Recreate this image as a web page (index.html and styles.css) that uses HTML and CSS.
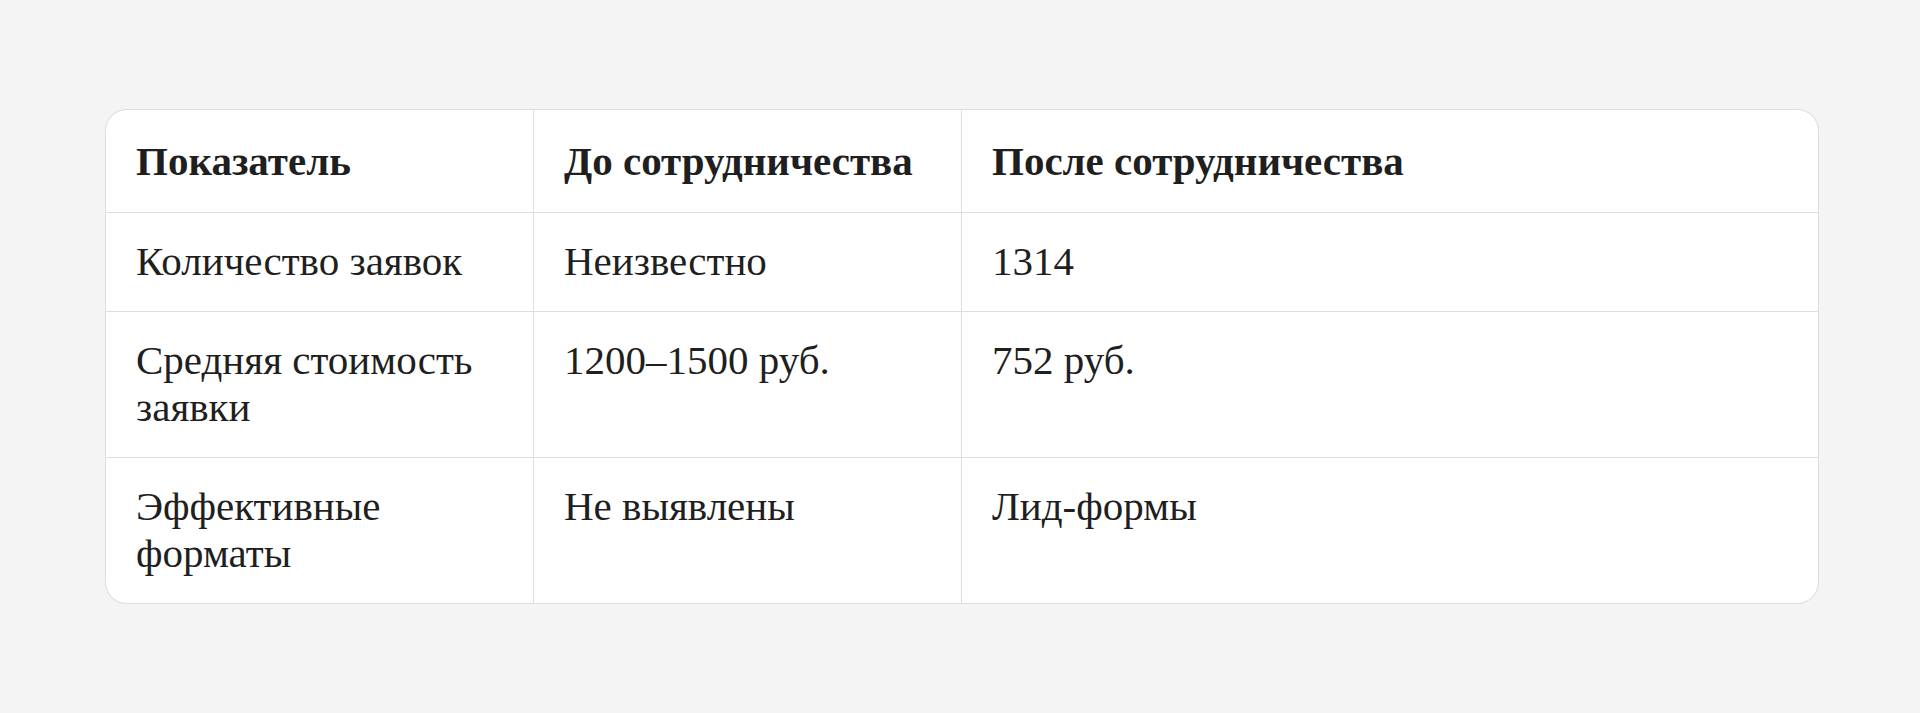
FILE: index.html
```html
<!DOCTYPE html>
<html lang="ru">
<head>
<meta charset="utf-8">
<title>Таблица</title>
<link rel="stylesheet" href="styles.css">
</head>
<body>
<main class="page">
  <div class="card">
    <table class="data">
      <colgroup>
        <col class="c1">
        <col class="c2">
        <col class="c3">
      </colgroup>
      <thead>
        <tr>
          <th>Показатель</th>
          <th>До сотрудничества</th>
          <th>После сотрудничества</th>
        </tr>
      </thead>
      <tbody>
        <tr>
          <td>Количество заявок</td>
          <td>Неизвестно</td>
          <td>1314</td>
        </tr>
        <tr>
          <td>Средняя стоимость заявки</td>
          <td>1200–1500 руб.</td>
          <td>752 руб.</td>
        </tr>
        <tr>
          <td>Эффективные форматы</td>
          <td>Не выявлены</td>
          <td>Лид-формы</td>
        </tr>
      </tbody>
    </table>
  </div>
</main>
</body>
</html>
```
FILE: styles.css
```css
html, body {
  margin: 0;
  padding: 0;
  background: #f4f4f4;
}
.page {
  padding: 109px 101px 0 105px;
}
.card {
  background: #ffffff;
  border: 1px solid #dedede;
  border-radius: 22px;
  overflow: hidden;
  box-shadow: 0 0 1px rgba(0,0,0,0.06);
}
.data {
  width: 100%;
  border-collapse: separate;
  border-spacing: 0;
  table-layout: fixed;
  font-family: "Liberation Serif", "DejaVu Serif", serif;
  font-size: 41px;
  line-height: 47px;
  color: #1f1f1f;
}
.c1 { width: 25%; }
.c2 { width: 25%; }
.c3 { width: 50%; }
.data th, .data td {
  box-sizing: border-box;
  text-align: left;
  vertical-align: top;
  padding: 25px 26px 26px 30px;
  border-right: 1px solid #dedede;
  border-bottom: 1px solid #dedede;
}
.data th {
  font-weight: 700;
  padding-top: 28px;
  padding-bottom: 27px;
}
.data tr > :last-child { border-right: none; }
.data tbody tr:last-child td { border-bottom: none; }
```
